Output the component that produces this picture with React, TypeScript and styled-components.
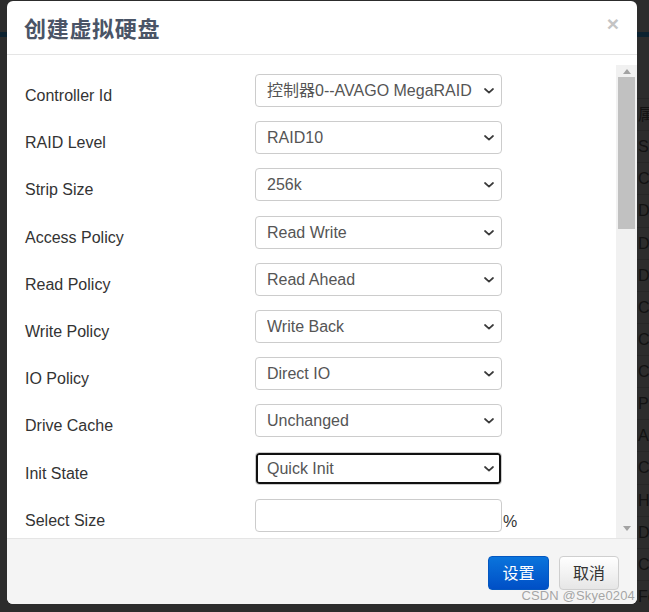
import React from "react";
import styled, { createGlobalStyle } from "styled-components";

const GlobalStyle = createGlobalStyle`
  html, body {
    margin: 0;
    padding: 0;
    background: #2c2c2c;
    font-family: "Liberation Sans", "Noto Sans CJK SC", Arial, sans-serif;
  }
  * { box-sizing: border-box; }
`;

interface Field {
  label: string;
  value?: string;
  options?: string[];
  focused?: boolean;
  input?: boolean;
}

const fields: Field[] = [
  { label: "Controller Id", value: "控制器0--AVAGO MegaRAID" },
  { label: "RAID Level", value: "RAID10", options: ["RAID0", "RAID1", "RAID5", "RAID10"] },
  { label: "Strip Size", value: "256k", options: ["64k", "128k", "256k", "512k"] },
  { label: "Access Policy", value: "Read Write" },
  { label: "Read Policy", value: "Read Ahead" },
  { label: "Write Policy", value: "Write Back" },
  { label: "IO Policy", value: "Direct IO" },
  { label: "Drive Cache", value: "Unchanged" },
  { label: "Init State", value: "Quick Init", focused: true },
  { label: "Select Size", input: true },
];

const backdropRows = ["属", "Se", "C", "D", "D", "D", "C", "C", "C", "Pi", "Ac", "C", "H", "D", "C", "Fo"];

const Chevron = () => (
  <ChevronIcon width="10" height="6" viewBox="0 0 10 6" aria-hidden>
    <path d="M1 1 L5 4.6 L9 1" fill="none" stroke="#3a3a3a" strokeWidth="1.7" strokeLinecap="round" strokeLinejoin="round" />
  </ChevronIcon>
);

export default function App() {
  return (
    <>
      <GlobalStyle />
      <Page>
        <NavStripe />
        <BackTable>
          {backdropRows.map((r, i) => (
            <BackRow key={i}>{r}</BackRow>
          ))}
        </BackTable>

        <Modal>
          <Header>
            <Title>创建虚拟硬盘</Title>
            <Close>×</Close>
          </Header>
          <Body>
            <Form>
              {fields.map((f) => (
                <Row key={f.label}>
                  <Label>{f.label}</Label>
                  {f.input ? (
                    <InputWrap>
                      <TextInput type="text" />
                      <Unit>%</Unit>
                    </InputWrap>
                  ) : (
                    <SelectWrap>
                      <Select $focused={f.focused} defaultValue={f.value}>
                        {(f.options ?? [f.value as string]).map((o) => (
                          <option key={o}>{o}</option>
                        ))}
                      </Select>
                      <Chevron />
                    </SelectWrap>
                  )}
                </Row>
              ))}
            </Form>
            <Scrollbar>
              <ArrowBtn>
                <Triangle $dir="up" />
              </ArrowBtn>
              <Thumb />
              <Spacer />
              <ArrowBtn>
                <Triangle $dir="down" />
              </ArrowBtn>
            </Scrollbar>
          </Body>
          <Footer>
            <Button $primary>设置</Button>
            <Button>取消</Button>
          </Footer>
        </Modal>

        <Watermark>CSDN @Skye0204</Watermark>
      </Page>
    </>
  );
}

const Page = styled.div`
  position: relative;
  width: 649px;
  height: 612px;
  overflow: hidden;
  background: #2c2c2c;
`;

const NavStripe = styled.div`
  margin-top: 32px;
  height: 5px;
  background: #0c2230;
`;

const BackTable = styled.div`
  margin: 61px 0 0 637px;
  display: flex;
  flex-direction: column;
`;

const BackRow = styled.div`
  height: 32.13px;
  border-top: 1px solid #262626;
  padding-left: 1px;
  font-size: 16px;
  line-height: 32px;
  color: #121212;
  white-space: nowrap;
  overflow: hidden;
`;

const Modal = styled.div`
  position: absolute;
  left: 7px;
  top: 1px;
  width: 630px;
  height: 603px;
  background: #fff;
  border-radius: 6px;
  overflow: hidden;
  display: flex;
  flex-direction: column;
`;

const Header = styled.div`
  height: 54px;
  flex-shrink: 0;
  border-bottom: 1px solid #e5e5e5;
  display: flex;
  align-items: center;
  justify-content: space-between;
  padding: 0 18px 0 17px;
`;

const Title = styled.h4`
  margin: 0;
  font-family: "Noto Sans CJK SC", sans-serif;
  font-weight: 700;
  font-size: 22px;
  letter-spacing: 0.7px;
  color: #4a5466;
  line-height: 1;
  margin-top: -1px;
`;

const Close = styled.span`
  font-family: "Liberation Sans", Arial, sans-serif;
  font-weight: 700;
  font-size: 21px;
  color: #c4c4c4;
  line-height: 1;
  margin-top: -8px;
`;

const Body = styled.div`
  height: 483px;
  flex-shrink: 0;
  padding-top: 10px;
  display: flex;
`;

const Form = styled.div`
  flex: 1;
  padding: 9px 0 0 18px;
  overflow: hidden;
`;

const Row = styled.div`
  display: flex;
  height: 33px;
  margin-bottom: 14.2px;
`;

const Label = styled.label`
  width: 230px;
  padding-top: 12px;
  font-size: 16px;
  line-height: 20px;
  color: #333;
`;

const SelectWrap = styled.div`
  position: relative;
  width: 247px;
  height: 33px;
`;

const Select = styled.select<{ $focused?: boolean }>`
  appearance: none;
  -webkit-appearance: none;
  width: 100%;
  height: 100%;
  border: 1px solid #cccccc;
  border-radius: 4px;
  background: #fff;
  padding: 0 24px 0 11px;
  font-family: "Liberation Sans", "Noto Sans CJK SC", sans-serif;
  font-size: 16px;
  color: #555;
  outline: none;
  box-shadow: ${(p) => (p.$focused ? "inset 0 0 0 2px #111" : "none")};
`;

const ChevronIcon = styled.svg`
  position: absolute;
  right: 8px;
  top: 14px;
  pointer-events: none;
`;

const InputWrap = styled.div`
  display: flex;
  align-items: flex-end;
`;

const TextInput = styled.input`
  width: 247px;
  height: 33px;
  border: 1px solid #cccccc;
  border-radius: 4px;
  padding: 0 11px;
  font-size: 16px;
  outline: none;
`;

const Unit = styled.span`
  font-size: 16px;
  color: #333;
  padding: 0 0 1px 1px;
  line-height: 18px;
`;

const Scrollbar = styled.div`
  width: 21px;
  background: #f1f1f1;
  display: flex;
  flex-direction: column;
  align-items: center;
`;

const ArrowBtn = styled.div`
  height: 12px;
  width: 100%;
  display: flex;
  align-items: center;
  justify-content: center;
  margin-bottom: 4px;
  &:first-child {
    margin-bottom: 0;
  }
`;

const Triangle = styled.div<{ $dir: "up" | "down" }>`
  width: 0;
  height: 0;
  border-left: 4.5px solid transparent;
  border-right: 4.5px solid transparent;
  ${(p) =>
    p.$dir === "up"
      ? "border-bottom: 5px solid #a3a3a3;"
      : "border-top: 5px solid #a3a3a3;"}
`;

const Thumb = styled.div`
  width: 17px;
  height: 152px;
  background: #c1c1c1;
`;

const Spacer = styled.div`
  flex: 1;
`;

const Footer = styled.div`
  flex: 1;
  background: #f4f4f4;
  border-top: 1px solid #e5e5e5;
  display: flex;
  justify-content: flex-end;
  align-items: flex-start;
  gap: 10px;
  padding: 17px 18px 0 0;
`;

const Button = styled.button<{ $primary?: boolean }>`
  height: 34px;
  padding: 0 ${(p) => (p.$primary ? "13.5px" : "13px")} 2px;
  border-radius: 4px;
  font-family: "Noto Sans CJK SC", sans-serif;
  font-size: 16px;
  line-height: 1;
  cursor: pointer;
  border: 1px solid ${(p) => (p.$primary ? "#0457c0" : "#cfcfcf")};
  color: ${(p) => (p.$primary ? "#fff" : "#333")};
  background: ${(p) =>
    p.$primary
      ? "linear-gradient(to bottom, #0a74dc 0%, #004fc6 100%)"
      : "linear-gradient(to bottom, #ffffff 0%, #e6e6e6 100%)"};
`;

const Watermark = styled.div`
  position: absolute;
  right: 14px;
  top: 588px;
  font-family: "Liberation Sans", Arial, sans-serif;
  font-size: 13px;
  letter-spacing: 0.15px;
  color: rgba(160, 160, 160, 0.95);
  pointer-events: none;
`;
